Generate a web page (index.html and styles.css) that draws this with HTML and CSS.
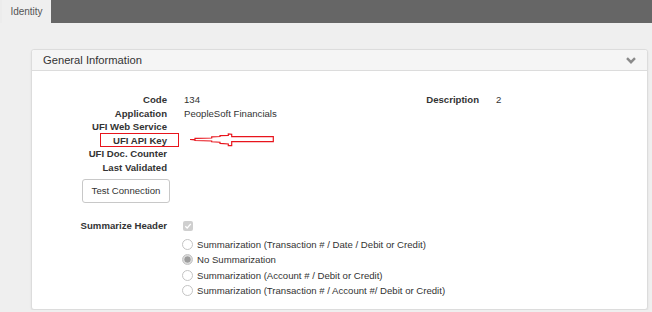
FILE: index.html
```html
<!DOCTYPE html>
<html lang="en">
<head>
    <meta charset="UTF-8">
    <meta name="viewport" content="width=device-width, initial-scale=1.0">
    <title>Identity</title>
    <link rel="stylesheet" href="styles.css">
</head>
<body>

    <!-- Tab strip -->
    <div class="tabbar">
        <div class="tab">Identity</div>
    </div>

    <div class="page">
        <div class="panel">
            <div class="panel-head">
                <span>General Information</span>
                <svg class="chevron" width="10" height="7" viewBox="0 0 10 7">
                    <path d="M1 1.2 L5 5.2 L9 1.2" fill="none" stroke="#8a8a8a" stroke-width="2.4"/>
                </svg>
            </div>

            <div class="panel-body">
                <div class="fields">
                    <div class="label">Code</div>
                    <div class="value">134</div>
                    <div class="label">Description</div>
                    <div class="value">2</div>

                    <div class="label">Application</div>
                    <div class="value">PeopleSoft Financials</div>
                    <div></div><div></div>

                    <div class="label">UFI Web Service</div>
                    <div class="value"></div>
                    <div></div><div></div>

                    <div class="label"><span class="mark">UFI API Key</span></div>
                    <div class="value"></div>
                    <div></div><div></div>

                    <div class="label">UFI Doc. Counter</div>
                    <div class="value"></div>
                    <div></div><div></div>

                    <div class="label">Last Validated</div>
                    <div class="value"></div>
                    <div></div><div></div>
                </div>

                <button class="btn">Test Connection</button>

                <div class="summary">
                    <div class="label">Summarize Header</div>
                    <div class="options">
                        <div class="check-row">
                            <span class="checkbox">
                                <svg width="10" height="10" viewBox="0 0 10 10">
                                    <path d="M2.3 5.2 L4.2 7 L7.8 2.8" fill="none" stroke="#fff" stroke-width="1.3"/>
                                </svg>
                            </span>
                        </div>
                        <label class="radio-row"><input type="radio" name="sum" disabled> Summarization (Transaction # / Date / Debit or Credit)</label>
                        <label class="radio-row"><input type="radio" name="sum" checked disabled> No Summarization</label>
                        <label class="radio-row"><input type="radio" name="sum" disabled> Summarization (Account # / Debit or Credit)</label>
                        <label class="radio-row"><input type="radio" name="sum" disabled> Summarization (Transaction # / Account #/ Debit or Credit)</label>
                    </div>
                </div>

                <!-- hand-drawn annotation arrow -->
                <svg class="arrow" width="86" height="15" viewBox="0 0 86 15">
                    <polygon points="1,6.5 6,6.5 6,5.3 22.7,5 22.7,3.9 31,3.5 31,2.7 39.3,2.4 39.3,1 42.7,1.2 42.7,3.7 84.3,3.7 84.3,8.7 42.7,8.7 42.7,12.7 39.3,12.7 39.3,11 31,10.4 31,9.2 22.7,8.8 22.7,8 6,7.5 6,6.8"
                             fill="none" stroke="#e8141c" stroke-width="1.2"/>
                </svg>
            </div>
        </div>
    </div>

</body>
</html>
```

FILE: styles.css
```css
* {
    margin: 0;
    padding: 0;
    box-sizing: border-box;
}

body {
    background-color: #efefef;
    font-family: 'Liberation Sans', Arial, sans-serif;
    font-size: 9.6px;
    color: #333;
}

.tabbar {
    height: 23px;
    background-color: #666;
    border-left: 2px solid #ececec;
    display: flex;
}

.tab {
    width: 49px;
    height: 23px;
    background-color: #efefef;
    color: #555;
    font-size: 10px;
    line-height: 24px;
    text-align: center;
}

.page {
    padding: 26px 4px 0 31px;
}

.panel {
    position: relative;
    background-color: #fff;
    border: 1px solid #dcdcdc;
    border-radius: 3px;
    box-shadow: 0 1px 2px rgba(0, 0, 0, 0.08);
}

.panel-head {
    height: 21px;
    background-color: #f5f5f5;
    border-bottom: 1px solid #dcdcdc;
    border-radius: 3px 3px 0 0;
    display: flex;
    align-items: center;
    justify-content: space-between;
    padding: 0 11px 0 11px;
    font-size: 11.2px;
    color: #333;
}

.chevron {
    margin-top: 1px;
}

.panel-body {
    padding: 22px 0 10px 15px;
}

.fields {
    display: grid;
    grid-template-columns: 120px 158px 120px auto;
    column-gap: 17px;
    grid-auto-rows: 13.6px;
    line-height: 13.6px;
}

.label {
    font-weight: bold;
    text-align: right;
    white-space: nowrap;
}

.value {
    white-space: nowrap;
}

.mark {
    position: relative;
    display: inline-block;
}

.mark::after {
    content: "";
    position: absolute;
    left: -13px;
    right: -12px;
    top: -1px;
    bottom: 0;
    border: 1px solid #e8141c;
}

.btn {
    display: block;
    width: 88px;
    height: 24px;
    margin: 4px 0 0 35px;
    background-color: #fff;
    border: 1px solid #c8c8c8;
    border-radius: 3px;
    font-family: inherit;
    font-size: 9.6px;
    color: #333;
}

.summary {
    display: grid;
    grid-template-columns: 120px auto;
    column-gap: 15px;
    margin-top: 16px;
}

.summary .label {
    line-height: 14px;
}

.options {
    display: flex;
    flex-direction: column;
}

.check-row {
    height: 14px;
    margin-bottom: 4px;
    display: flex;
    align-items: center;
}

.checkbox {
    width: 10px;
    height: 10px;
    margin-left: 1px;
    background-color: #cfcfcf;
    border-radius: 2px;
    display: flex;
}

.radio-row {
    height: 15.5px;
    display: flex;
    align-items: center;
    gap: 4px;
    white-space: nowrap;
}

.radio-row input {
    appearance: none;
    width: 11px;
    height: 11px;
    border: 1px solid #c4c4c4;
    border-radius: 50%;
    background-color: #fff;
}

.radio-row input:checked {
    background: radial-gradient(circle, #9d9d9d 0 2.8px, #dadada 3.4px);
}

.arrow {
    position: absolute;
    left: 157px;
    top: 83px;
}
```
